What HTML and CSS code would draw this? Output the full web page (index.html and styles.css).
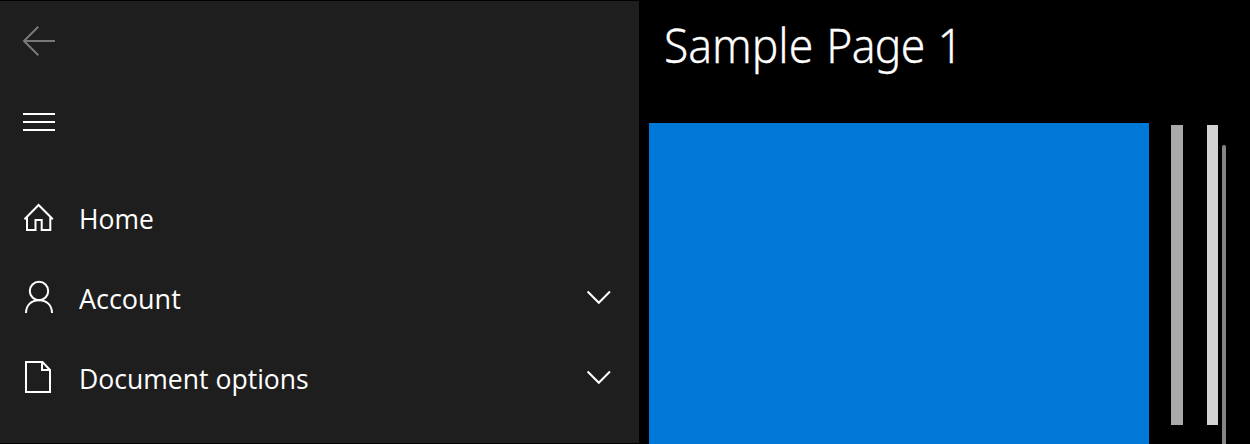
FILE: index.html
```html
<!DOCTYPE html>
<html lang="en">
<head>
<meta charset="utf-8">
<title>Sample Page 1</title>
<link rel="stylesheet" href="styles.css">
</head>
<body>
<div class="app">
  <nav class="pane">
    <div class="row row-back"><svg class="icon icon-muted" viewBox="0 0 34 80"><path d="M2 40H33M16.3 25.8L2 40l14.3 14.2"/></svg></div>
    <div class="row"><svg class="icon" viewBox="0 0 34 80"><path d="M1 33H33M1 41H33M1 49H33"/></svg></div>
    <div class="menu">
      <div class="row">
        <svg class="icon" viewBox="0 0 34 80"><path d="M2.5 40.2L16.6 26L30.8 40.2M5 38V51H13.5V41H19.7V51H28.3V38"/></svg>
        <span class="label label-home">Home</span>
      </div>
      <div class="row">
        <svg class="icon" viewBox="0 0 34 80"><circle cx="17" cy="32" r="9.2"/><path d="M4 54C4 46 9.5 41.2 17 41.2S30 46 30 54"/></svg>
        <span class="label label-account">Account</span>
        <svg class="chevron" viewBox="0 0 24 80"><path d="M0.6 32.5L11.8 43.8L23 32.5"/></svg>
      </div>
      <div class="row">
        <svg class="icon" viewBox="0 0 34 80"><path d="M4 23H20.5L28 31V53H4ZM20 23V31H28"/></svg>
        <span class="label label-document">Document options</span>
        <svg class="chevron" viewBox="0 0 24 80"><path d="M0.6 32.5L11.8 43.8L23 32.5"/></svg>
      </div>
    </div>
  </nav>
  <main class="page">
    <h1 class="title"><span class="title-text">Sample <span class="title-tight">Page</span> 1</span></h1>
    <div class="content">
      <div class="tile"></div>
      <div class="bar bar-gray"></div>
      <div class="bar bar-light"></div>
      <div class="scrollbar"></div>
    </div>
  </main>
</div>
</body>
</html>
```
FILE: styles.css
```css
body { margin: 0; background: #000; color: #fff; font-family: "Open Sans", "Noto Sans", sans-serif; overflow: hidden; }
.app { display: flex; width: 1250px; height: 443px; padding-top: 1px; }
.pane { width: 639px; height: 442px; background: #1e1e1e; flex: none; }
.row { display: flex; height: 80px; align-items: center; padding: 0 28px 0 22px; }
.menu { padding-top: 18px; }
.icon { width: 34px; height: 80px; flex: none; }
.chevron { width: 24px; height: 80px; margin-left: auto; flex: none; overflow: visible; }
svg { fill: none; stroke: #fff; stroke-width: 2; }
.icon-muted { stroke: #797979; }
.label { margin-left: 23px; font-size: 27.5px; line-height: 40px; white-space: nowrap; transform-origin: left center; }
.label-home { transform: scaleX(0.963); }
.label-account { transform: scaleX(0.98); }
.label-document { transform: scaleX(0.966); }
.page { width: 611px; height: 443px; display: flex; flex-direction: column; }
.title { margin: 0; height: 122px; box-sizing: border-box; padding: 12px 0 0 25px; font-family: "Noto Sans", "Open Sans", sans-serif; font-size: 47px; line-height: 64px; font-weight: 300; }
.title-text { display: inline-block; white-space: nowrap; word-spacing: 1.5px; transform: scaleX(0.945); transform-origin: left center; -webkit-text-stroke: 0.3px #fff; }
.title-tight { letter-spacing: -0.7px; }
.content { flex: 1; display: flex; align-items: flex-start; padding-left: 10px; }
.tile { width: 500px; height: 321px; background: #0078d7; }
.bar { height: 300px; margin-top: 2px; }
.bar-gray { width: 12px; margin-left: 22px; background: #a9a9a9; }
.bar-light { width: 11px; margin-left: 24px; background: #d3d3d3; }
.scrollbar { width: 4px; height: 299px; margin: 22px 0 0 4px; background: #858585; border-radius: 2px 2px 0 0; }
```
